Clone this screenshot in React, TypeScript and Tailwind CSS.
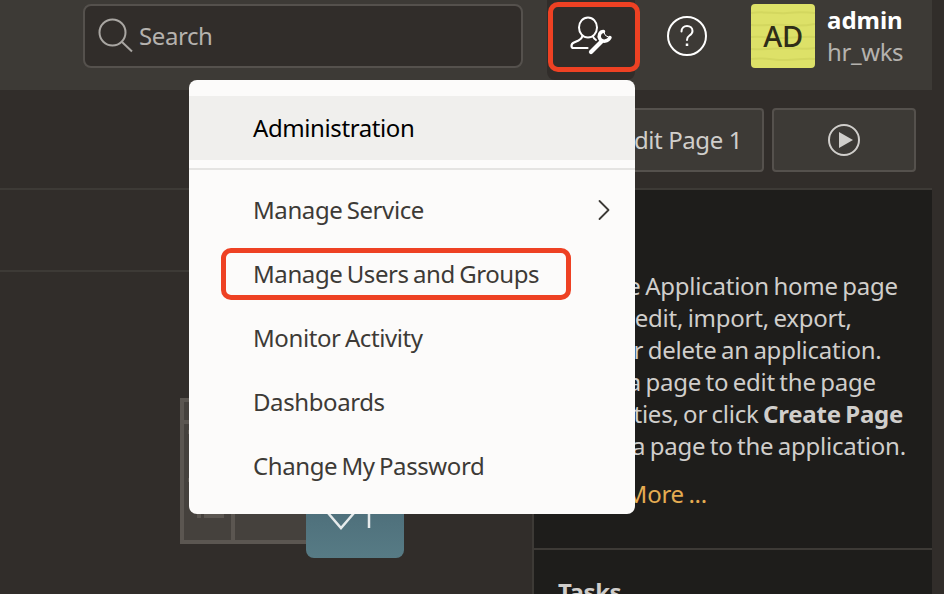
import { ChevronRight } from "lucide-react";

const menuItems = ["Monitor Activity", "Dashboards", "Change My Password"];

function AdminIcon() {
  return (
    <svg width="44" height="40" viewBox="0 0 44 40" fill="none" stroke="white" strokeLinecap="round">
      <ellipse cx="19" cy="11.500" rx="9" ry="10" strokeWidth="2" />
      <path d="M13.500 20c-.5 2-2 3.500-4 4.500l-4.500 2c-1.500.7-2.500 1.800-2.500 3.500 0 1.500.5 2 2 2h14" strokeWidth="2.200" strokeLinejoin="round" />
      <path d="M24 20.500c.5 1.500 1.500 2.500 3 3.500" strokeWidth="2" />
      <path d="M22 36l10.500-10.500" strokeWidth="4.200" />
      <path d="M34.500 15.500c-3.500 0-5.500 4-3.500 7.500 2.500 3.500 8 2.500 10-1.500" strokeWidth="3.500" />
      <path d="M34.500 15.500l2 4 4 2" strokeWidth="1" />
    </svg>
  );
}

function SearchIcon() {
  return (
    <svg width="36" height="36" viewBox="0 0 36 36" fill="none" stroke="#a9a6a2" strokeWidth="2">
      <circle cx="14.500" cy="14.500" r="13" />
      <path d="M24 24l10 9.500" />
    </svg>
  );
}

function HelpIcon() {
  return (
    <svg width="40" height="40" viewBox="0 0 40 40" fill="none" stroke="white" strokeWidth="2">
      <circle cx="20" cy="20" r="19" />
      <path d="M14.500 15.500c0-3.500 2.500-5.500 5.500-5.500s5.500 2 5.500 5c0 2.500-1.500 3.500-3 4.500-1.500 1-2.500 2-2.500 4.500" strokeLinecap="round" />
      <path d="M20 27.500v2.500" strokeWidth="2.500" />
    </svg>
  );
}

function AvatarTexture() {
  return (
    <svg className="absolute inset-0" width="64" height="64" viewBox="0 0 64 64" fill="none" stroke="#d3d75f" strokeWidth="2">
      <path d="M0 9c14-2 24 1 36 0s18-1 28 0" />
      <path d="M0 21c12 1 22-1 34 0s20 1 30-1" />
      <path d="M0 33c10-1 20 1 32 1s22-2 32-1" />
      <path d="M0 45c14 1 24-1 36-1s20 2 28 0" />
      <path d="M0 55c12-2 22 1 34 1s20-2 30-1" />
    </svg>
  );
}

function Illustration() {
  return (
    <svg width="230" height="170" viewBox="0 0 230 170" fill="none">
      <defs>
        <linearGradient id="tile" x1="0" y1="0" x2="0" y2="1">
          <stop offset="0" stopColor="#4a6a76" />
          <stop offset="1" stopColor="#577b85" />
        </linearGradient>
      </defs>
      <rect x="2" y="2" width="150" height="142" fill="#45413d" stroke="#5b5651" strokeWidth="4" />
      <path d="M2 24h150M53 24v120M17 118h4M24 118h20M8 34h4M8 82h4" stroke="#5b5651" strokeWidth="4" />
      <rect x="126" y="90" width="98" height="70" rx="8" fill="url(#tile)" />
      <path d="M148 115l13 15 13-15" stroke="#e6ebec" strokeWidth="2.500" />
      <path d="M189 108v22" stroke="#e6ebec" strokeWidth="2.500" />
    </svg>
  );
}

export default function App() {
  return (
    <div className="relative h-[594px] w-[944px] overflow-hidden bg-[#312d2a] font-['Noto_Sans',sans-serif] text-[24px] tracking-[-0.017em] whitespace-nowrap [word-spacing:-1.5px]">
      <div className="w-[932px]">
        <header className="flex h-[90px] items-start bg-[#3d3a36] pl-[83px]">
          <div className="mt-1 flex h-16 w-[440px] items-center gap-[5px] rounded-lg border-2 border-[#55514d] bg-[#312d2a] pl-[13px] text-[#b5b2ae]">
            <SearchIcon />
            <span>Search</span>
          </div>
          <div className="relative ml-6 flex h-20 w-[88px] items-start justify-center rounded-b-lg bg-[#312d2a] pt-4">
            <AdminIcon />
            <div className="absolute top-[2px] left-[1px] h-[70px] w-[92px] rounded-[10px] border-[5px] border-[#ee4123]" />
          </div>
          <div className="mt-4 ml-8">
            <HelpIcon />
          </div>
          <div className="relative mt-1 ml-[44px] flex h-16 w-16 items-center justify-center overflow-hidden rounded bg-[#dde168] text-[29px] font-medium text-[#2f2d18]">
            <AvatarTexture />
            <span className="relative">AD</span>
          </div>
          <div className="mt-1 ml-3 leading-8">
            <div className="font-bold tracking-normal text-white">admin</div>
            <div className="text-[#b5b2ae]">hr_wks</div>
          </div>
        </header>

        <div className="flex h-[100px] items-start justify-end gap-2 border-b-2 border-[#3d3a36] pt-[18px] pr-4">
          <button className="h-16 w-[166px] rounded border-2 border-[#55514d] bg-[#3d3a36] pl-px text-[#d0cecb]">Edit Page 1</button>
          <button className="flex h-16 w-[144px] items-center justify-center rounded border-2 border-[#55514d] bg-[#3d3a36]">
            <svg width="34" height="34" viewBox="0 0 34 34" fill="none">
              <circle cx="17" cy="17" r="15" stroke="#d0cecb" strokeWidth="2" />
              <path d="M12 9l14 8-14 8z" fill="#d0cecb" />
            </svg>
          </button>
        </div>

        <div className="flex h-[404px]">
          <div className="w-[532px] shrink-0">
            <div className="h-[82px] border-b-2 border-[#3d3a36]" />
            <div className="mt-[126px] ml-[180px]">
              <Illustration />
            </div>
          </div>
          <aside className="w-[400px] shrink-0 overflow-hidden border-l-2 border-[#3d3a36] bg-[#1e1d1b]">
            <div className="h-[360px] border-b-2 border-[#3d3a36] px-6 pt-[80px] leading-8 tracking-[-0.01em] text-[#d0cecb]">
              <p>
                Use the Application home page
                <br />
                to run, edit, import, export,
                <br />
                copy, or delete an application.
                <br />
                Select a page to edit the page
                <br />
                properties, or click <b>Create Page</b>
                <br />
                to add a page to the application.
              </p>
              <p className="mt-4 text-[#e5ac52]">Learn More ...</p>
            </div>
            <div className="px-6 pt-6 font-bold text-[#d0cecb]">Tasks</div>
          </aside>
        </div>
      </div>

      <div className="absolute top-20 left-[189px] w-[446px] rounded-lg bg-[#fcfbfa] py-4 text-[#3d3a36]">
        <div className="flex h-16 items-center bg-[#f0efed] pl-16 text-black">Administration</div>
        <div className="mt-2 mb-2 h-0.5 bg-[#e5e4e2]" />
        <div className="flex h-16 items-center justify-between pr-[13px] pl-16">
          <span>Manage Service</span>
          <ChevronRight size={36} strokeWidth={1.2} />
        </div>
        <div className="relative flex h-16 items-center pl-16">
          <span>Manage Users and Groups</span>
          <div className="absolute top-[6px] left-8 h-[52px] w-[350px] rounded-[10px] border-[5px] border-[#ee4123]" />
        </div>
        {menuItems.map((item) => (
          <div key={item} className="flex h-16 items-center pl-16">
            {item}
          </div>
        ))}
      </div>
    </div>
  );
}
